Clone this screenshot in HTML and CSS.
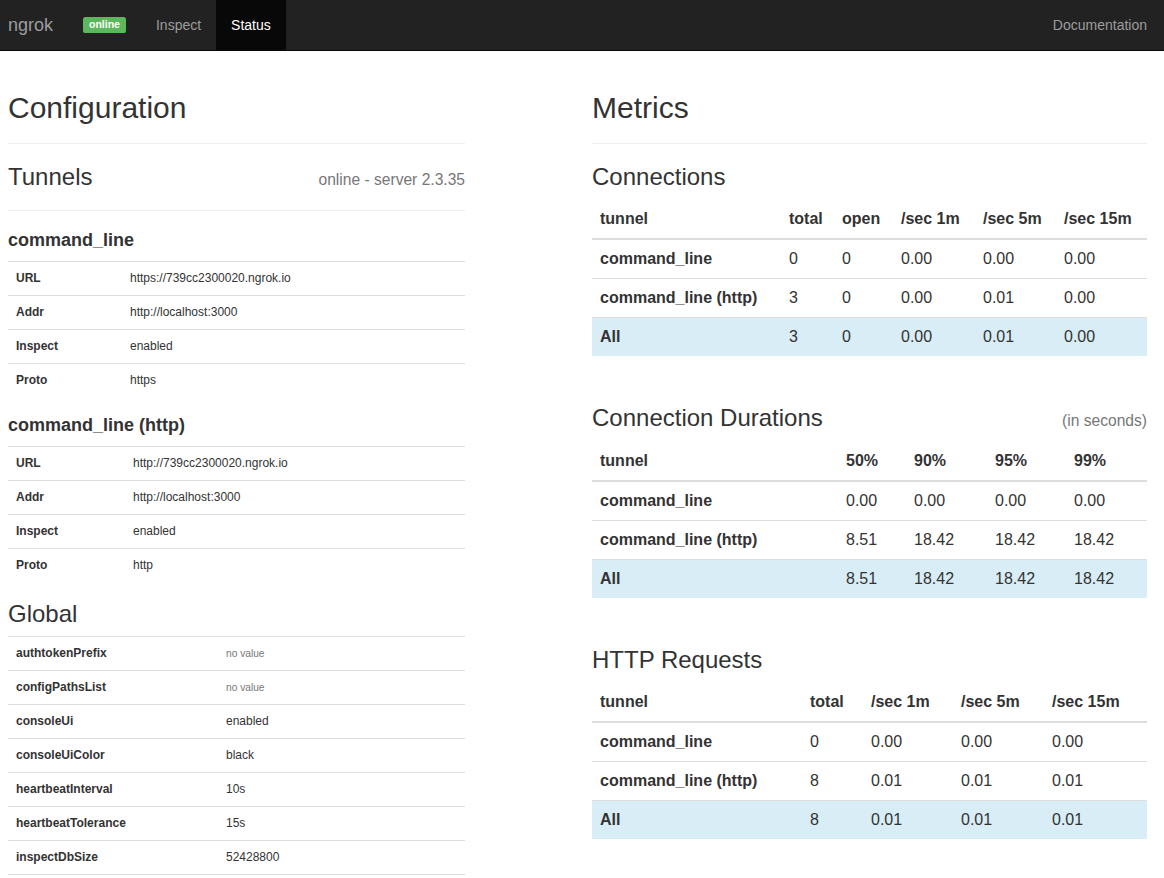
FILE: index.html
```html
<!DOCTYPE html>
<html lang="en">
<head>
<meta charset="utf-8">
<title>ngrok - Status</title>
<link rel="stylesheet" href="styles.css">
</head>
<body>
<nav class="navbar">
  <div class="nav-left">
    <a class="brand" href="#">ngrok</a>
    <span class="label-online">online</span>
    <ul class="nav-links">
      <li><a href="#">Inspect</a></li>
      <li class="active"><a href="#">Status</a></li>
    </ul>
  </div>
  <ul class="nav-links nav-right">
    <li><a href="#">Documentation</a></li>
  </ul>
</nav>

<main class="page">
  <section class="col">
    <div class="page-header"><h2>Configuration</h2></div>

    <div class="sub-header">
      <h3>Tunnels</h3>
      <small class="muted-note">online - server 2.3.35</small>
    </div>

    <h4 class="tunnel-name">command_line</h4>
    <table class="kv kv-a">
      <colgroup><col class="key-col"><col></colgroup>
      <tbody>
        <tr><td class="key">URL</td><td>https://739cc2300020.ngrok.io</td></tr>
        <tr><td class="key">Addr</td><td>http://localhost:3000</td></tr>
        <tr><td class="key">Inspect</td><td>enabled</td></tr>
        <tr><td class="key">Proto</td><td>https</td></tr>
      </tbody>
    </table>

    <h4 class="tunnel-name">command_line (http)</h4>
    <table class="kv kv-b">
      <colgroup><col class="key-col"><col></colgroup>
      <tbody>
        <tr><td class="key">URL</td><td>http://739cc2300020.ngrok.io</td></tr>
        <tr><td class="key">Addr</td><td>http://localhost:3000</td></tr>
        <tr><td class="key">Inspect</td><td>enabled</td></tr>
        <tr><td class="key">Proto</td><td>http</td></tr>
      </tbody>
    </table>

    <h3 class="global-title">Global</h3>
    <table class="kv kv-global">
      <colgroup><col class="key-col"><col></colgroup>
      <tbody>
        <tr><td class="key">authtokenPrefix</td><td><small class="no-value">no value</small></td></tr>
        <tr><td class="key">configPathsList</td><td><small class="no-value">no value</small></td></tr>
        <tr><td class="key">consoleUi</td><td>enabled</td></tr>
        <tr><td class="key">consoleUiColor</td><td>black</td></tr>
        <tr><td class="key">heartbeatInterval</td><td>10s</td></tr>
        <tr><td class="key">heartbeatTolerance</td><td>15s</td></tr>
        <tr><td class="key">inspectDbSize</td><td>52428800</td></tr>
      </tbody>
    </table>
  </section>

  <section class="col">
    <div class="page-header"><h2>Metrics</h2></div>

    <div class="metric">
      <div class="metric-head"><h3>Connections</h3></div>
      <table class="mtable m-conn">
        <colgroup><col><col><col><col><col><col></colgroup>
        <thead>
          <tr><th>tunnel</th><th>total</th><th>open</th><th>/sec 1m</th><th>/sec 5m</th><th>/sec 15m</th></tr>
        </thead>
        <tbody>
          <tr><td class="name">command_line</td><td>0</td><td>0</td><td>0.00</td><td>0.00</td><td>0.00</td></tr>
          <tr><td class="name">command_line (http)</td><td>3</td><td>0</td><td>0.00</td><td>0.01</td><td>0.00</td></tr>
          <tr class="all"><td class="name">All</td><td>3</td><td>0</td><td>0.00</td><td>0.01</td><td>0.00</td></tr>
        </tbody>
      </table>
    </div>

    <div class="metric">
      <div class="metric-head"><h3>Connection Durations</h3><small class="muted-note">(in seconds)</small></div>
      <table class="mtable m-dur">
        <colgroup><col><col><col><col><col></colgroup>
        <thead>
          <tr><th>tunnel</th><th>50%</th><th>90%</th><th>95%</th><th>99%</th></tr>
        </thead>
        <tbody>
          <tr><td class="name">command_line</td><td>0.00</td><td>0.00</td><td>0.00</td><td>0.00</td></tr>
          <tr><td class="name">command_line (http)</td><td>8.51</td><td>18.42</td><td>18.42</td><td>18.42</td></tr>
          <tr class="all"><td class="name">All</td><td>8.51</td><td>18.42</td><td>18.42</td><td>18.42</td></tr>
        </tbody>
      </table>
    </div>

    <div class="metric">
      <div class="metric-head"><h3>HTTP Requests</h3></div>
      <table class="mtable m-http">
        <colgroup><col><col><col><col><col></colgroup>
        <thead>
          <tr><th>tunnel</th><th>total</th><th>/sec 1m</th><th>/sec 5m</th><th>/sec 15m</th></tr>
        </thead>
        <tbody>
          <tr><td class="name">command_line</td><td>0</td><td>0.00</td><td>0.00</td><td>0.00</td></tr>
          <tr><td class="name">command_line (http)</td><td>8</td><td>0.01</td><td>0.01</td><td>0.01</td></tr>
          <tr class="all"><td class="name">All</td><td>8</td><td>0.01</td><td>0.01</td><td>0.01</td></tr>
        </tbody>
      </table>
    </div>
  </section>
</main>
</body>
</html>
```
FILE: styles.css
```css
* { box-sizing: border-box; }

html, body { margin: 0; }

body {
  font-family: "Liberation Sans", Arial, Helvetica, sans-serif;
  font-size: 14px;
  line-height: 1.42857;
  color: #333;
  background: #fff;
}

/* ---------- navbar ---------- */
.navbar {
  display: flex;
  justify-content: space-between;
  height: 51px;
  background: #222;
  border-bottom: 1px solid #080808;
  padding: 0 2px 0 8px;
}

.nav-left {
  display: flex;
  align-items: center;
}

.brand {
  font-size: 18px;
  line-height: 20px;
  color: #9d9d9d;
  text-decoration: none;
  padding-right: 15px;
}

.label-online {
  display: inline-block;
  margin-left: 15px;
  background: #5cb85c;
  color: #fff;
  font-weight: 700;
  font-size: 10.5px;
  line-height: 1;
  padding: 2.1px 6px 3.15px;
  border-radius: 2.6px;
}

.nav-links {
  display: flex;
  list-style: none;
  margin: 0 0 0 15px;
  padding: 0;
}

.nav-links a {
  display: block;
  padding: 15px;
  line-height: 20px;
  color: #9d9d9d;
  text-decoration: none;
}

.nav-links .active a {
  background: #080808;
  color: #fff;
}

.nav-right { margin-left: 0; }

/* ---------- page layout ---------- */
.page {
  display: grid;
  grid-template-columns: 457px 555px;
  justify-content: space-between;
  padding: 0 17px 0 8px;
}

h2, h3, h4 { margin: 0; line-height: 1.1; }
h2 { font-size: 30px; font-weight: 400; }
h3 { font-size: 24px; font-weight: 400; }
h4 { font-size: 18px; font-weight: 700; }

.page-header {
  margin: 40px 0 20px;
  padding-bottom: 19px;
  border-bottom: 1px solid #eee;
}

.sub-header {
  display: flex;
  justify-content: space-between;
  align-items: baseline;
  margin-bottom: 20px;
  padding-bottom: 20px;
  border-bottom: 1px solid #eee;
}

.muted-note {
  font-size: 15.6px;
  line-height: 1;
  color: #777;
}

.tunnel-name { margin-bottom: 10px; }
.global-title { margin-bottom: 9px; }

/* ---------- key/value tables ---------- */
.kv {
  width: 100%;
  border-collapse: collapse;
  border-spacing: 0;
  table-layout: fixed;
  margin-bottom: 19px;
  font-size: 12px;
  line-height: 17px;
}

.kv td {
  padding: 8px;
  border-top: 1px solid #ddd;
  vertical-align: top;
  text-align: left;
}

.kv .key { font-weight: 700; }

.kv-a .key-col { width: 114px; }
.kv-b .key-col { width: 117px; }
.kv-global .key-col { width: 210px; }

.kv-global { border-bottom: 1px solid #ddd; }

.no-value {
  font-size: 10.2px;
  color: #777;
}

/* ---------- metrics ---------- */
.metric + .metric { margin-top: 49px; }

.metric-head {
  display: flex;
  justify-content: space-between;
  align-items: baseline;
  margin-bottom: 10px;
}

.mtable {
  width: 100%;
  border-collapse: collapse;
  border-spacing: 0;
  table-layout: fixed;
  font-size: 16px;
  line-height: 22px;
}

.mtable th,
.mtable td {
  padding: 8px;
  text-align: left;
  vertical-align: top;
  white-space: nowrap;
}

.mtable th {
  font-weight: 700;
  border-bottom: 2px solid #ddd;
}

.mtable td { border-top: 1px solid #ddd; }
.mtable .name { font-weight: 700; }
.mtable .all td { background: #d9edf7; }

.m-conn col:nth-child(1) { width: 189px; }
.m-conn col:nth-child(2) { width: 53px; }
.m-conn col:nth-child(3) { width: 59px; }
.m-conn col:nth-child(4) { width: 82px; }
.m-conn col:nth-child(5) { width: 81px; }
.m-conn col:nth-child(6) { width: 91px; }

.m-dur col:nth-child(1) { width: 246px; }
.m-dur col:nth-child(2) { width: 68px; }
.m-dur col:nth-child(3) { width: 81px; }
.m-dur col:nth-child(4) { width: 79px; }
.m-dur col:nth-child(5) { width: 81px; }

.m-http col:nth-child(1) { width: 210px; }
.m-http col:nth-child(2) { width: 61px; }
.m-http col:nth-child(3) { width: 90px; }
.m-http col:nth-child(4) { width: 91px; }
.m-http col:nth-child(5) { width: 103px; }
```
